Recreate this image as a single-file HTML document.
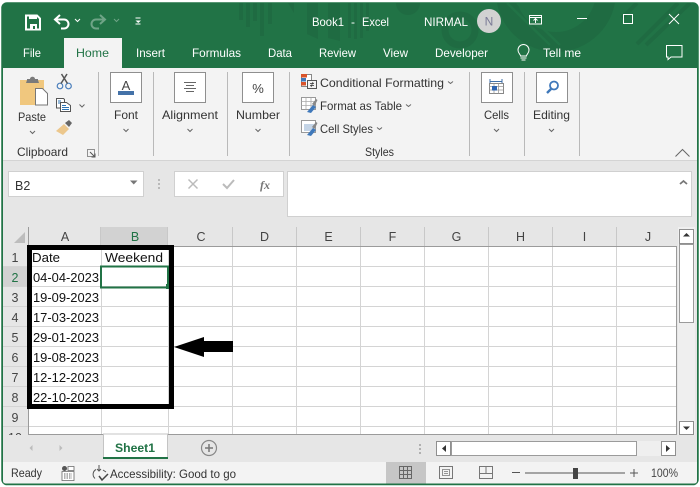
<!DOCTYPE html>
<html><head><meta charset="utf-8"><title>Book1 - Excel</title>
<style>
html,body{margin:0;padding:0;background:#fff;width:700px;height:487px;overflow:hidden}
svg{display:block}
text{font-family:"Liberation Sans",sans-serif;font-size:12px;fill:#333}
.w text{fill:#fff}
.c text{font-size:13px;fill:#111}
.h text{font-size:12.500px;fill:#444;text-anchor:middle}
.ln{stroke:#d4d4d4;stroke-width:1}
.box{fill:#fff;stroke:#8f8f8f;stroke-width:1}
.chev{fill:none;stroke:#666;stroke-width:1}
</style></head><body>
<svg width="700" height="487" viewBox="0 0 700 487" xmlns="http://www.w3.org/2000/svg">
<defs><clipPath id="tb"><path d="M2 68V8a5 5 0 0 1 5-5H693a5 5 0 0 1 5 5V68Z"/></clipPath></defs>
<rect width="700" height="487" fill="#fff"/>
<!-- window -->
<rect x="2" y="3" width="696" height="481.5" rx="5" fill="#e6e6e6" stroke="#217346" stroke-width="1.5"/>
<path d="M2 68V8a5 5 0 0 1 5-5H693a5 5 0 0 1 5 5V68Z" fill="#217346"/>
<!-- title bar decoration -->
<g clip-path="url(#tb)">
<g fill="#1f6b42" stroke="none">
<rect x="239" y="3" width="4" height="17"/><rect x="246" y="3" width="4" height="24"/><rect x="253" y="3" width="4" height="18"/><rect x="260" y="3" width="4" height="33"/><rect x="268" y="3" width="4" height="21"/>
<path d="M288 3h6v10z"/><path d="M307 3h11v36l-11-5z"/><path d="M328 3h12v38l-12-3z"/>
<rect x="348" y="3" width="3" height="35"/><rect x="354" y="3" width="3" height="36"/><rect x="360" y="3" width="3" height="35"/><rect x="366" y="3" width="3" height="28"/>
<path d="M396 3h24a12 12 0 0 1-24 0z"/>
</g>
<g fill="none" stroke="#1f6b42">
<circle cx="460" cy="30" r="15" stroke-width="7"/>
<circle cx="556" cy="-8" r="50" stroke-width="20"/>
<path d="M637 44L678 3M646 45L690 3M622 18L637 3" stroke-width="4"/>
</g>
<path d="M507 3L550 45M517 3L560 45" stroke="#217346" stroke-width="2.500" fill="none"/>
</g>
<!-- QAT -->
<g fill="none" stroke="#fff">
<path d="M26 15.500h11l3 3v11H26z" stroke-width="2"/>
<rect x="29" y="15" width="8" height="4" fill="#fff" stroke="none"/>
<rect x="30" y="24" width="7" height="5" fill="#fff" stroke="none"/>
<rect x="33" y="26" width="2" height="3" fill="#217346" stroke="none"/>
<path d="M60 15l-5 4.500 5 4.500M55 19.500h9a4.500 4.500 0 0 1 0 9h-3" stroke-width="2"/>
<path d="M75 19l2.500 2.500L80 19" stroke-width="1"/>
<g opacity=".35"><path d="M100 15l5 4.500-5 4.500M105 19.500h-9a4.500 4.500 0 0 0 0 9h3" stroke-width="2"/>
<path d="M114 19l2.500 2.500 2.500-2.500" stroke-width="1"/></g>
<path d="M135.500 18h5M135.500 24h5" stroke-width="1"/>
</g>
<path d="M135.500 20.500h5.500l-2.750 2.500z" fill="#fff"/>
<!-- title text -->
<g class="w">
<text x="312" y="26" textLength="32" lengthAdjust="spacingAndGlyphs">Book1</text>
<text x="351" y="26">-</text>
<text x="362" y="26" textLength="27" lengthAdjust="spacingAndGlyphs">Excel</text>
<text x="424" y="26" textLength="44" lengthAdjust="spacingAndGlyphs">NIRMAL</text>
<text x="23" y="57" textLength="18" lengthAdjust="spacingAndGlyphs">File</text>
<text x="136" y="57" textLength="29" lengthAdjust="spacingAndGlyphs">Insert</text>
<text x="192" y="57" textLength="49" lengthAdjust="spacingAndGlyphs">Formulas</text>
<text x="268" y="57" textLength="24" lengthAdjust="spacingAndGlyphs">Data</text>
<text x="319" y="57" textLength="37" lengthAdjust="spacingAndGlyphs">Review</text>
<text x="383" y="57" textLength="25" lengthAdjust="spacingAndGlyphs">View</text>
<text x="435" y="57" textLength="53" lengthAdjust="spacingAndGlyphs">Developer</text>
<text x="543" y="57" textLength="38" lengthAdjust="spacingAndGlyphs">Tell me</text>
</g>
<circle cx="489" cy="21" r="12" fill="#d2d2d2"/>
<text x="489" y="25.500" text-anchor="middle" style="fill:#7a7a96;font-size:12px">N</text>
<!-- window controls -->
<g fill="none" stroke="#fff" stroke-width="1">
<rect x="529.500" y="15.500" width="12" height="8.500"/><path d="M529.500 17.500h12M535.500 23v-4M533.500 20.500l2-2 2 2"/>
<path d="M577 18.500h10"/>
<rect x="623.500" y="14.500" width="9" height="9"/>
<path d="M669 14l10 10M679 14l-10 10"/>
<path d="M520.500 56c0-2-2.500-2.500-2.500-6a5.500 5.500 0 0 1 11 0c0 3.500-2.500 4-2.500 6z"/>
<path d="M520.500 58h6M521.500 60h4"/>
<path d="M666.500 45.500h15.500v11.500h-11l-3 2.500v-2.500h-1.500z"/>
</g>
<!-- ribbon -->
<rect x="3" y="68" width="694" height="92" fill="#f3f3f3"/>
<rect x="3" y="160" width="694" height="1" fill="#d4d4d4"/>
<rect x="64" y="38" width="58" height="30" fill="#f3f3f3"/>
<text x="76" y="57" textLength="33" lengthAdjust="spacingAndGlyphs" style="fill:#217346">Home</text>
<g stroke="#b9b9b9"><path d="M98.500 72v84M153.500 72v84M227.500 72v84M289.500 72v84M469.500 72v84M524.500 72v84M579.500 72v84"/></g>
<!-- clipboard icons -->
<path d="M20 80h24v25H20z" fill="#f0c77e"/>
<path d="M27 80v-1h3c0-3 5-3 5 0h3v1l1 3H26z" fill="#7a7a7a"/>
<path d="M35.500 88.500h7l5 5v11.500h-12z" fill="#fff" stroke="#777"/>
<g fill="none" stroke="#4a7ebb" stroke-width="1.200"><circle cx="60" cy="86" r="2.800"/><circle cx="68.500" cy="86" r="2.800"/></g>
<path d="M61 83.500l6-9.500M67.500 83.500l-6-9.500" stroke="#555" stroke-width="1.500" fill="none"/>
<g fill="#fff" stroke="#555"><path d="M56.500 98.500h7l1 1v8.500h-8z"/><path d="M60.500 102.500h6l4 3v6h-10z"/></g>
<path d="M62 105.500h4M62 107.500h7M62 109.500h7M58 101h3M58 103h2" stroke="#2e75b6" stroke-width="1"/>
<path d="M56 131l8-7 5 5-6 6z" fill="#ecc78c"/><path d="M65 123l4-3 3 3-3 4z" fill="#666"/>
<path d="M79.500 104.500l2.500 2.500 2.500-2.500M30 131l2.500 2.500L35 131M123.500 129l2.500 2.500 2.500-2.500M187.500 129l2.500 2.500 2.500-2.500M255.500 129l2.500 2.500 2.500-2.500M494 129l2.500 2.500 2.500-2.500M549 129l2.500 2.500 2.500-2.500" class="chev"/>
<rect x="87.500" y="149.500" width="7" height="7" fill="none" stroke="#777" stroke-width=".8"/>
<path d="M90 152l5 5M95 153.500v3.500h-3.500" fill="none" stroke="#555"/>
<text x="18" y="121" textLength="28" lengthAdjust="spacingAndGlyphs">Paste</text>
<text x="17" y="156" textLength="51" lengthAdjust="spacingAndGlyphs">Clipboard</text>
<!-- big buttons -->
<rect class="box" x="110.500" y="72.500" width="31" height="30"/>
<rect class="box" x="174.500" y="72.500" width="31" height="30"/>
<rect class="box" x="242.500" y="72.500" width="31" height="30"/>
<rect class="box" x="481.500" y="72.500" width="31" height="30"/>
<rect class="box" x="536.500" y="72.500" width="31" height="30"/>
<text x="126" y="90" text-anchor="middle" style="font-size:13px;fill:#444">A</text>
<rect x="118" y="91" width="16" height="4" fill="#4472a8"/>
<path d="M184 82.500h12M186 85.500h8M184 88.500h12M186 91.500h8" stroke="#666"/>
<text x="258" y="93" text-anchor="middle" style="font-size:13px;fill:#444">%</text>
<path d="M490 81.500h12M490 79v5M502 79v5" stroke="#3f6fa8" fill="none"/>
<path d="M489.500 83.500h14v10h-14z" fill="#fff" stroke="#888"/>
<path d="M489.500 86.500h14M489.500 90h14M494 83.500v10M498.500 83.500v10" stroke="#999" stroke-width=".8"/>
<rect x="492" y="86" width="5" height="4.500" fill="#2e64b0"/>
<circle cx="554" cy="85.500" r="4" fill="none" stroke="#3f78ba" stroke-width="1.800"/>
<path d="M551 89l-4 4" stroke="#3f78ba" stroke-width="2.400"/>
<text x="114" y="119" textLength="24" lengthAdjust="spacingAndGlyphs">Font</text>
<text x="162" y="119" textLength="56" lengthAdjust="spacingAndGlyphs">Alignment</text>
<text x="236" y="119" textLength="44" lengthAdjust="spacingAndGlyphs">Number</text>
<text x="484" y="119" textLength="25" lengthAdjust="spacingAndGlyphs">Cells</text>
<text x="533" y="119" textLength="37" lengthAdjust="spacingAndGlyphs">Editing</text>
<!-- styles -->
<rect x="301.500" y="74.500" width="10" height="12" fill="#fff" stroke="#888"/>
<rect x="301" y="74" width="6" height="3.500" fill="#d9542b"/><rect x="301" y="78" width="5" height="3.500" fill="#3f78ba"/><rect x="301" y="82" width="5" height="3.500" fill="#d9542b"/>
<rect x="307.500" y="80.500" width="9" height="8" fill="#f3f3f3" stroke="#555"/>
<path d="M310 83.500h4M310 85.500h4M313 82l-2 5" stroke="#333" stroke-width=".7"/>
<rect x="301.500" y="97.500" width="14" height="12" fill="#fff" stroke="#999"/><path d="M301.500 101.500h14M301.500 105.500h14M306 97.500v12M311 97.500v12" stroke="#aaa" stroke-width=".8"/>
<path d="M307 112l6-7 3 2-5 6z" fill="#3f78ba"/><path d="M312 104l4-5 1.500 1-3 6z" fill="#888"/>
<rect x="301.500" y="120.500" width="14" height="12" fill="#fff" stroke="#999"/><rect x="304" y="124" width="10" height="7" fill="#c4d4e6"/>
<path d="M307 135l6-7 3 2-5 6z" fill="#3f78ba"/><path d="M312 127l4-5 1.500 1-3 6z" fill="#888"/>
<text x="320" y="87" textLength="124" lengthAdjust="spacingAndGlyphs">Conditional Formatting</text>
<text x="320" y="110" textLength="82" lengthAdjust="spacingAndGlyphs">Format as Table</text>
<text x="320" y="133" textLength="53" lengthAdjust="spacingAndGlyphs">Cell Styles</text>
<text x="365" y="156" textLength="29" lengthAdjust="spacingAndGlyphs">Styles</text>
<path d="M448 81.500l2.500 2 2.500-2M406 104.500l2.500 2 2.500-2M377 127.500l2.500 2 2.500-2" class="chev" stroke-width=".9"/>
<path d="M675.500 156.500l7-7 7 7" fill="none" stroke="#666" stroke-width="1"/>
<!-- formula bar -->
<rect x="8.500" y="171.500" width="135" height="25" fill="#fff" stroke="#d0d0d0"/>
<text x="15" y="190" style="font-size:12.500px">B2</text>
<path d="M130 180.500h7.500l-3.750 4z" fill="#777"/>
<path d="M159 179v2M159 183v2M159 187v2" stroke="#aaa" stroke-width="1.500"/>
<rect x="174.500" y="171.500" width="109" height="25" fill="#fff" stroke="#d0d0d0"/>
<path d="M188.500 179.500l9 9M197.500 179.500l-9 9" stroke="#bbb" stroke-width="1.500"/>
<path d="M223 184l4 4 7-8" stroke="#bbb" stroke-width="2" fill="none"/>
<text x="260" y="189" style="font-family:'Liberation Serif',serif;font-style:italic;font-weight:bold;font-size:12px;fill:#777">fx</text>
<rect x="287.500" y="171.500" width="404" height="45" fill="#fff" stroke="#d0d0d0"/>
<path d="M680 184l3.500-3 3.500 3" fill="none" stroke="#777" stroke-width="1.800"/>
<!-- column headers -->
<rect x="101" y="227" width="67" height="19" fill="#d2d2d2"/>
<path d="M25 232v11H14z" fill="#bdbdbd"/>
<path d="M28.500 227v19M100.500 227v19M167.500 227v19M232.500 227v19M296.500 227v19M360.500 227v19M424.500 227v19M488.500 227v19M552.500 227v19M616.500 227v19" stroke="#c8c8c8"/>
<g class="h">
<text x="65" y="241">A</text><text x="135" y="241" style="fill:#217346">B</text><text x="201" y="241">C</text><text x="264.500" y="241">D</text><text x="328.500" y="241">E</text><text x="392.500" y="241">F</text><text x="456.500" y="241">G</text><text x="520.500" y="241">H</text><text x="584.500" y="241">I</text><text x="648" y="241">J</text>
</g>
<!-- grid -->
<rect x="28" y="246" width="648" height="188" fill="#fff"/>
<g class="ln">
<path d="M3 266.500H676M3 286.500H676M3 306.500H676M3 326.500H676M3 346.500H676M3 366.500H676M3 386.500H676M3 406.500H676M3 426.500H676"/>
<path d="M101.500 246V434M168.500 246V434M232.500 246V434M296.500 246V434M360.500 246V434M424.500 246V434M488.500 246V434M552.500 246V434M616.500 246V434"/>
</g>
<rect x="3" y="267" width="25" height="19" fill="#d2d2d2"/>
<path d="M28.500 227V434.500H676.500V246.500H28.500" fill="none" stroke="#9b9b9b"/>
<g class="h">
<text x="15" y="262">1</text><text x="15" y="282" style="fill:#217346">2</text><text x="15" y="302">3</text><text x="15" y="322">4</text><text x="15" y="342">5</text><text x="15" y="362">6</text><text x="15" y="382">7</text><text x="15" y="402">8</text><text x="15" y="422">9</text><text x="15" y="442">10</text>
</g>
<g class="c">
<text x="32" y="262" textLength="28" lengthAdjust="spacingAndGlyphs">Date</text>
<text x="105" y="262" textLength="58" lengthAdjust="spacingAndGlyphs">Weekend</text>
<text x="33" y="282" textLength="66" lengthAdjust="spacingAndGlyphs">04-04-2023</text>
<text x="33" y="302" textLength="66" lengthAdjust="spacingAndGlyphs">19-09-2023</text>
<text x="33" y="322" textLength="66" lengthAdjust="spacingAndGlyphs">17-03-2023</text>
<text x="33" y="342" textLength="66" lengthAdjust="spacingAndGlyphs">29-01-2023</text>
<text x="33" y="362" textLength="66" lengthAdjust="spacingAndGlyphs">19-08-2023</text>
<text x="33" y="382" textLength="66" lengthAdjust="spacingAndGlyphs">12-12-2023</text>
<text x="33" y="402" textLength="66" lengthAdjust="spacingAndGlyphs">22-10-2023</text>
</g>
<!-- selection -->
<rect x="101" y="266.500" width="67" height="21" fill="none" stroke="#217346" stroke-width="2"/>
<!-- annotation -->
<rect x="29.500" y="247.500" width="142" height="159" fill="none" stroke="#000" stroke-width="5"/>
<rect x="166" y="284" width="3" height="5" fill="#217346"/>
<path d="M174 347L204 337V341H233V352H204V357Z" fill="#000"/>
<!-- vertical scrollbar -->
<rect x="678" y="227" width="17" height="208" fill="#efefef"/>
<rect x="679.500" y="229.500" width="14" height="14" fill="#fff" stroke="#8f8f8f"/>
<path d="M683 236.500h7l-3.500-3.500z" fill="#333"/>
<rect x="679.500" y="244.500" width="14" height="78" fill="#fff" stroke="#9b9b9b"/>
<rect x="679.500" y="421.500" width="14" height="13" fill="#fff" stroke="#8f8f8f"/>
<path d="M683 426.500h7l-3.500 3.500z" fill="#333"/>
<!-- sheet tabs -->
<rect x="3" y="435" width="694" height="27" fill="#e6e6e6"/>
<path d="M32.500 445v6l-3-3zM59.500 445v6l3-3z" fill="#bcbcbc"/>
<rect x="103.500" y="434" width="64" height="24" fill="#fff" stroke="#c4c4c4"/>
<rect x="103" y="457" width="65" height="2" fill="#217346"/>
<text x="115" y="452" textLength="40" lengthAdjust="spacingAndGlyphs" style="font-weight:bold;fill:#217346">Sheet1</text>
<circle cx="209" cy="448" r="7.500" fill="none" stroke="#888" stroke-width="1.200"/>
<path d="M205 448h8M209 444v8" stroke="#777" stroke-width="1.500"/>
<path d="M420 444v2M420 448v2M420 452v2" stroke="#b0b0b0" stroke-width="2"/>
<rect x="451" y="441" width="225" height="15" fill="#efefef"/>
<rect x="436.500" y="441.500" width="14" height="14" fill="#fff" stroke="#8f8f8f"/>
<path d="M446 445v7l-4-3.500z" fill="#333"/>
<rect x="451.500" y="441.500" width="185" height="14" fill="#fff" stroke="#9b9b9b"/>
<rect x="661.500" y="441.500" width="14" height="14" fill="#fff" stroke="#8f8f8f"/>
<path d="M666 445v7l4-3.500z" fill="#333"/>
<!-- status bar -->
<rect x="3" y="462" width="694" height="22" fill="#f3f3f3"/>
<text x="11" y="477" textLength="31" lengthAdjust="spacingAndGlyphs">Ready</text>
<circle cx="64.500" cy="468.500" r="2.500" fill="#555"/>
<path d="M62 471.500h12v9h-12zM68 466.500h6v4h-6z" fill="#fff" stroke="#666" stroke-width=".8"/>
<path d="M64 474h8M64 476h8M64 478h8" stroke="#666" stroke-width="1" stroke-dasharray="1.500 1"/>
<path d="M96 469.500a5.500 5.500 0 0 0-1 9M99 465v6M97 469l2 2 2-2M103 470l3 2" fill="none" stroke="#555"/>
<path d="M99 476l3 4 6-6" fill="none" stroke="#444" stroke-width="1.500"/>
<text x="110" y="478" textLength="126" lengthAdjust="spacingAndGlyphs">Accessibility: Good to go</text>
<rect x="386" y="462" width="40" height="22" fill="#c6c6c6"/>
<path d="M399.500 466.500h12v12h-12zM399.500 470.500h12M399.500 474.500h12M403.500 466.500v12M407.500 466.500v12" fill="none" stroke="#666"/>
<rect x="439.500" y="466.500" width="13" height="12" fill="none" stroke="#777"/>
<path d="M442.500 469.500h7v6h-7zM444 471.500h4M444 473.500h4" fill="none" stroke="#777" stroke-width=".8"/>
<path d="M479.500 466.500h13v12h-13zM479.500 473.500h13M486 466.500v7" fill="none" stroke="#777"/>
<path d="M512 472.500h8M525 473h100M630 473h8M634 469v8" stroke="#555" stroke-width="1"/>
<rect x="573" y="468" width="5" height="11" fill="#444"/>
<text x="651" y="477" textLength="27" lengthAdjust="spacingAndGlyphs" style="fill:#444">100%</text>
<!-- window edges -->
<path d="M2.500 68V481a3 3 0 0 0 3 3H694.500a3 3 0 0 0 3-3V68" fill="none" stroke="#217346"/>
</svg>
</body></html>
